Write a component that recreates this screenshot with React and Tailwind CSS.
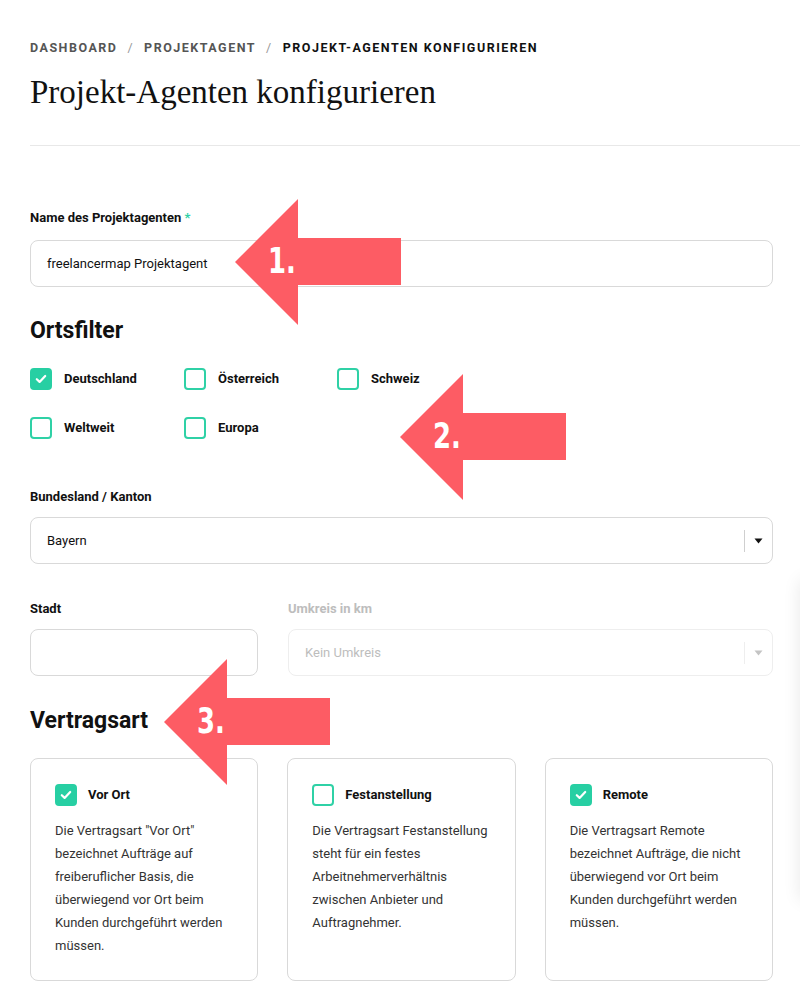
import { useState } from 'react';

// Projekt-Agenten konfigurieren

const sans = { fontFamily: 'Roboto, "Liberation Sans", sans-serif' };

const countries = ['Deutschland', 'Österreich', 'Schweiz', 'Weltweit', 'Europa'];

const contractTypes = [
  {
    key: 'vorort',
    title: 'Vor Ort',
    text: 'Die Vertragsart "Vor Ort" bezeichnet Aufträge auf freiberuflicher Basis, die überwiegend vor Ort beim Kunden durchgeführt werden müssen.',
  },
  {
    key: 'fest',
    title: 'Festanstellung',
    text: 'Die Vertragsart Festanstellung steht für ein festes Arbeitnehmerverhältnis zwischen Anbieter und Auftragnehmer.',
  },
  {
    key: 'remote',
    title: 'Remote',
    text: 'Die Vertragsart Remote bezeichnet Aufträge, die nicht überwiegend vor Ort beim Kunden durchgeführt werden müssen.',
  },
];

const Checkbox = ({ checked, onClick }) => (
  <button
    type="button"
    onClick={onClick}
    className={
      checked
        ? 'w-[22px] h-[22px] rounded-[4px] bg-[#27cfa3] border-2 border-[#27cfa3] flex items-center justify-center flex-shrink-0'
        : 'w-[22px] h-[22px] rounded-[4px] bg-white border-2 border-[#2fd1a6] flex-shrink-0'
    }
  >
    {checked && (
      <svg width="12" height="10" viewBox="0 0 12 10" fill="none">
        <path d="M1.8 5.2 4.6 7.9 10.2 2" stroke="white" strokeWidth="2.2" strokeLinecap="round" strokeLinejoin="round" />
      </svg>
    )}
  </button>
);

const Caret = ({ color }) => (
  <svg width="9" height="6" viewBox="0 0 9 6">
    <path d="M0.5 0.5h8L4.5 5.5z" fill={color} />
  </svg>
);

// roter Hinweispfeil (Overlay)
const Arrow = ({ label, className }) => (
  <div className={'absolute w-[166px] h-[126px] ' + className}>
    <svg width="166" height="126" viewBox="0 0 166 126" className="absolute inset-0">
      <path d="M0 63 63 0V39H166V86H63V126Z" fill="#fd5c64" />
    </svg>
    <span
      className="absolute left-[33px] top-[44px] text-white text-[35px] leading-[36px] font-bold scale-x-[0.74] origin-left"
      style={{ fontFamily: '"DejaVu Sans", "Liberation Sans", sans-serif' }}
    >
      {label}
    </span>
  </div>
);

const App = () => {
  const [selected, setSelected] = useState({ Deutschland: true });
  const [contracts, setContracts] = useState({ vorort: true, remote: true });

  return (
    <div className="relative w-[800px] min-h-[1000px] bg-white overflow-hidden text-[#111]" style={sans}>
      <div className="pl-[30px] pr-[27px] pt-[40px] pb-10">
        {/* Breadcrumb */}
        <div className="flex items-center gap-[10px] text-[12.5px] leading-4 font-bold tracking-[0.12em] uppercase">
          <span className="text-[#555]">Dashboard</span>
          <span className="text-[#999] font-normal">/</span>
          <span className="text-[#555]">Projektagent</span>
          <span className="text-[#999] font-normal">/</span>
          <span className="text-[#111]">Projekt-Agenten konfigurieren</span>
        </div>

        <h1
          className="mt-[17px] text-[33px] leading-[38px] text-[#111]"
          style={{ fontFamily: '"Liberation Serif", "DejaVu Serif", serif' }}
        >
          Projekt-Agenten konfigurieren
        </h1>

        <div className="mt-[34px] h-px bg-[#e8e8e8] mr-[-27px]" />

        {/* Name */}
        <label className="block mt-[64px] text-[13px] leading-4 font-bold">
          Name des Projektagenten <span className="text-[#2fd1a6]">*</span>
        </label>
        <div className="mt-[14px] h-[47px] rounded-lg border border-[#d9d9d9] flex items-center px-4 text-[13px]">
          freelancermap Projektagent
        </div>

        {/* Ortsfilter */}
        <h2 className="mt-[30px] text-[23px] leading-7 font-bold">Ortsfilter</h2>
        <div className="mt-[23px] grid grid-cols-[154px_153px_154px] gap-y-[27px]">
          {countries.map((c) => (
            <div key={c} className="flex items-center gap-3 h-[22px]">
              <Checkbox
                checked={!!selected[c]}
                onClick={() => setSelected({ ...selected, [c]: !selected[c] })}
              />
              <span className="text-[13px] font-bold">{c}</span>
            </div>
          ))}
        </div>

        {/* Bundesland */}
        <label className="block mt-[50px] text-[13px] leading-4 font-bold">Bundesland / Kanton</label>
        <div className="mt-3 h-[47px] rounded-lg border border-[#d9d9d9] flex items-center pl-4 text-[13px]">
          <span className="flex-1">Bayern</span>
          <div className="w-px h-[22px] bg-[#cfcfcf]" />
          <div className="w-[27px] flex justify-center">
            <Caret color="#111" />
          </div>
        </div>

        {/* Stadt / Umkreis */}
        <div className="mt-[37px] flex gap-[30px]">
          <div className="w-[228px]">
            <label className="block text-[13px] leading-4 font-bold">Stadt</label>
            <div className="mt-3 h-[47px] rounded-lg border border-[#d9d9d9]" />
          </div>
          <div className="flex-1">
            <label className="block text-[13px] leading-4 font-bold text-[#bdbdbd]">Umkreis in km</label>
            <div className="mt-3 h-[47px] rounded-lg border border-[#eeeeee] flex items-center pl-4 text-[13px] text-[#bdbdbd]">
              <span className="flex-1">Kein Umkreis</span>
              <div className="w-px h-[22px] bg-[#eeeeee]" />
              <div className="w-[27px] flex justify-center">
                <Caret color="#c4c4c4" />
              </div>
            </div>
          </div>
        </div>

        {/* Vertragsart */}
        <h2 className="mt-[31px] text-[23px] leading-7 font-bold">Vertragsart</h2>
        <div className="mt-[23px] grid grid-cols-3 gap-[29px]">
          {contractTypes.map((ct) => (
            <div key={ct.key} className="rounded-lg border border-[#d9d9d9] pt-[25px] pb-[23px] px-6 min-h-[222px]">
              <div className="flex items-center gap-[11px]">
                <Checkbox
                  checked={!!contracts[ct.key]}
                  onClick={() => setContracts({ ...contracts, [ct.key]: !contracts[ct.key] })}
                />
                <span className="text-[13px] font-bold">{ct.title}</span>
              </div>
              <p className="mt-[13px] text-[13px] leading-[23px] text-[#333]">{ct.text}</p>
            </div>
          ))}
        </div>
      </div>

      {/* angeschnittenes Element am rechten Rand */}
      <div className="absolute left-[800px] top-[580px] w-10 h-[320px] bg-white shadow-[0_0_18px_rgba(0,0,0,0.09)]" />

      {/* Hinweispfeile */}
      <Arrow label="1." className="left-[235px] top-[199px]" />
      <Arrow label="2." className="left-[400px] top-[374px]" />
      <Arrow label="3." className="left-[164px] top-[659px]" />
    </div>
  );
};

export default App;
